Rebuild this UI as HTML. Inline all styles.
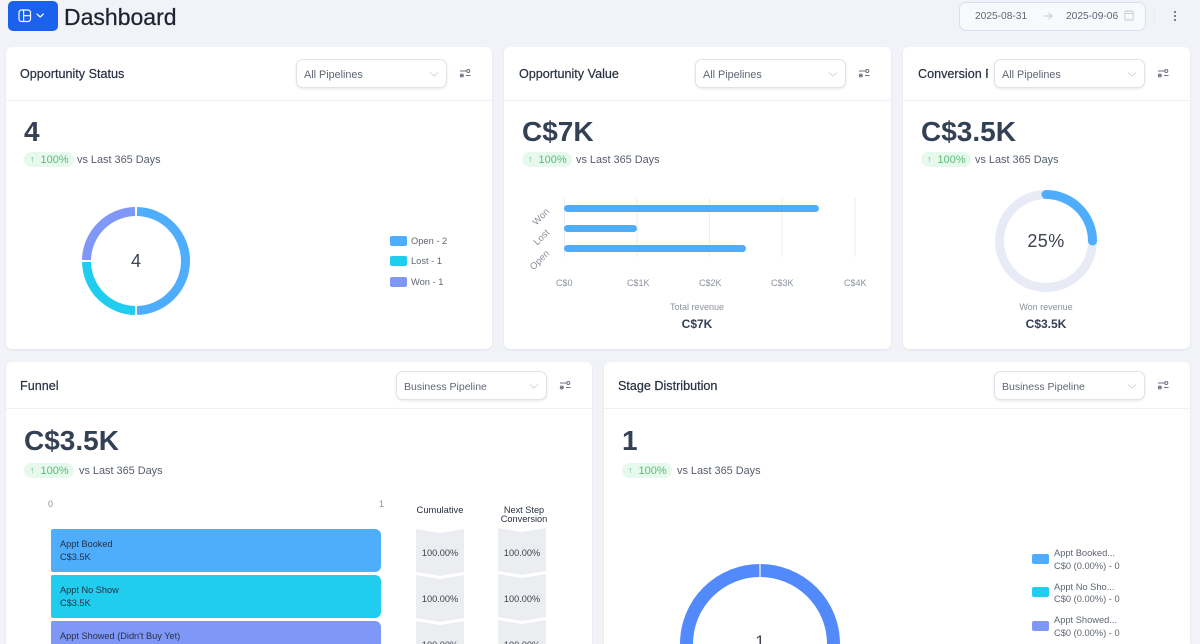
<!DOCTYPE html>
<html lang="en"><head><meta charset="utf-8"><title>Dashboard</title>
<style>
html,body{margin:0;padding:0;width:1200px;height:644px;overflow:hidden;background:#f1f3f8;font-family:"Liberation Sans",sans-serif;color:#344054}
#root{position:relative;width:1200px;height:644px;overflow:hidden;filter:blur(.35px)}
.a{position:absolute}
.t{position:absolute;white-space:nowrap;line-height:16px;height:16px}
.card{position:absolute;background:#fff;border-radius:6px;box-shadow:0 1px 2px rgba(16,24,40,.08)}
.open{border-radius:6px 6px 0 0}
.line{position:absolute;height:1px;background:#eef0f4}
.title{font-size:12.6px;color:#27303f;-webkit-text-stroke:.2px #27303f}
.sel{position:absolute;width:149px;height:27px;background:#fff;border:1px solid #e0e3ea;border-radius:7px;box-shadow:0 1px 2px rgba(16,24,40,.1)}
.sel span{position:absolute;left:7px;top:7px;font-size:10.8px;line-height:16px;color:#5f6673;white-space:nowrap}
.sel span.b{font-size:10.5px}
.sel svg{position:absolute;right:7px;top:11px}
.big{font-size:28px;font-weight:bold;color:#344054;line-height:32px;height:32px}
.badge{position:absolute;width:50px;height:15px;border-radius:8px;background:#e7f8ec;color:#57bd78;font-size:11px;line-height:16px;white-space:nowrap}
.badge i{font-style:normal;font-size:9px;margin:0 6px 0 6px;position:relative;top:-1px}
.vs{font-size:10.9px;color:#555d6b}
.sm{font-size:9px;color:#8b919c}
.leg{font-size:9.3px;color:#5f6673}
.sw{position:absolute;width:17px;height:10px;border-radius:2px}
.fb{position:absolute;left:51px;width:330px;border-radius:2px 6px 6px 2px}
.ft{font-size:9.2px;color:#27303f}
.pc{font-size:9.2px;color:#3d4450;width:48px;text-align:center}
.cut{height:7px;overflow:hidden}
</style></head><body><div id="root">

<div class="a" style="left:8px;top:1px;width:50px;height:30px;background:#1a62ee;border-radius:5px">
<svg class="a" style="left:10px;top:8px" width="30" height="14" viewBox="0 0 30 14" fill="none" stroke="#fff" stroke-width="1.2" stroke-linecap="round" stroke-linejoin="round"><rect x="1" y="1" width="11.5" height="11.5" rx="2.5"/><path d="M5.6 1v11.5M5.6 6.7h6.9"/><path d="M19 5l3.2 3 3.2-3"/></svg></div>
<div class="t" style="left:64px;top:4px;font-size:23px;line-height:26px;height:26px;color:#1d2430;-webkit-text-stroke:.25px #1d2430">Dashboard</div>

<div class="a" style="left:959px;top:2px;width:185px;height:27px;background:#f8f9fd;border:1px solid #d9dff0;border-radius:7px"></div>
<div class="t" style="left:975px;top:9px;font-size:10.2px;color:#5f6673">2025-08-31</div>
<svg class="a" style="left:1043px;top:11px" width="10" height="10" viewBox="0 0 10 10" fill="none" stroke="#c5c8ce" stroke-width=".9"><path d="M1 5h8M5.6 1.6L9 5 5.600 8.400"/></svg>
<div class="t" style="left:1066px;top:9px;font-size:10.2px;color:#5f6673">2025-09-06</div>
<svg class="a" style="left:1124px;top:10px" width="10" height="11" viewBox="0 0 10 11" fill="none" stroke="#c5c8ce" stroke-width=".9"><rect x=".8" y="1.2" width="8.4" height="8.8" rx="1"/><path d="M.8 3.6h8.4M3 .3v1.6M7 .3v1.6"/></svg>
<div class="a" style="left:1154px;top:8px;width:1px;height:16px;background:#eceef3"></div>
<svg class="a" style="left:1173px;top:10px" width="4" height="12" viewBox="0 0 4 12" fill="#555d6b"><circle cx="2" cy="2" r="1"/><circle cx="2" cy="6" r="1"/><circle cx="2" cy="10" r="1"/></svg>

<!-- Card 1 -->
<div class="card" style="left:6px;top:47px;width:486px;height:302px"></div>
<div class="line" style="left:6px;top:100px;width:486px"></div>
<div class="t title" style="left:20px;top:66px">Opportunity Status</div>
<div class="sel" style="left:296px;top:59px"><span>All Pipelines</span><svg width="10" height="7" viewBox="0 0 10 7" fill="none" stroke="#d5d8dd"><path d="M1 1.500l4 3.500 4-3.500"/></svg></div>
<svg class="a" style="left:459px;top:67px" width="12" height="12" viewBox="0 0 12 12" fill="none" stroke="#6b7280" stroke-width="1"><path d="M1 4h6.500M1 8.500h3.500M7 8.500h4.500"/><circle cx="9.300" cy="4" r="1.500"/><circle cx="2.800" cy="8.500" r="1.500"/></svg>
<div class="t big" style="left:24px;top:116px">4</div>
<div class="badge" style="left:24px;top:152px"><i>↑</i>100%</div>
<div class="t vs" style="left:77px;top:152px">vs Last 365 Days</div>
<svg class="a" style="left:76px;top:201px" width="120" height="120" viewBox="0 0 120 120" fill="none" stroke-width="9"><path d="M61 10.510A49.500 49.500 0 0 1 61 109.490" stroke="#4fadfd"/><path d="M59 109.490A49.500 49.500 0 0 1 10.510 61" stroke="#20cdee"/><path d="M10.510 59A49.500 49.500 0 0 1 59 10.510" stroke="#7f97f7"/></svg>
<div class="t" style="left:116px;top:251px;width:40px;text-align:center;font-size:18px;line-height:20px;height:20px;color:#3d4450">4</div>
<div class="sw" style="left:390px;top:236px;background:#4fadfd"></div><div class="t leg" style="left:411px;top:233px">Open - 2</div>
<div class="sw" style="left:390px;top:256px;background:#20cdee"></div><div class="t leg" style="left:411px;top:253px">Lost - 1</div>
<div class="sw" style="left:390px;top:277px;background:#7f97f7"></div><div class="t leg" style="left:411px;top:274px">Won - 1</div>

<!-- Card 2 -->
<div class="card" style="left:504px;top:47px;width:387px;height:302px"></div>
<div class="line" style="left:504px;top:100px;width:387px"></div>
<div class="t title" style="left:519px;top:66px">Opportunity Value</div>
<div class="sel" style="left:695px;top:59px"><span>All Pipelines</span><svg width="10" height="7" viewBox="0 0 10 7" fill="none" stroke="#d5d8dd"><path d="M1 1.500l4 3.500 4-3.500"/></svg></div>
<svg class="a" style="left:858px;top:67px" width="12" height="12" viewBox="0 0 12 12" fill="none" stroke="#6b7280" stroke-width="1"><path d="M1 4h6.500M1 8.500h3.500M7 8.500h4.500"/><circle cx="9.300" cy="4" r="1.500"/><circle cx="2.800" cy="8.500" r="1.500"/></svg>
<div class="t big" style="left:522px;top:116px">C$7K</div>
<div class="badge" style="left:522px;top:152px"><i>↑</i>100%</div>
<div class="t vs" style="left:576px;top:152px">vs Last 365 Days</div>
<svg class="a" style="left:520px;top:195px" width="350" height="80" viewBox="0 0 350 80" fill="none">
<path d="M44.500 3V62M117 3V62M189.500 3V62M262 3V62M335 3V62" stroke="#eceef1"/>
<rect x="44" y="10" width="255" height="7" rx="3.500" fill="#4fadfd"/><rect x="44" y="30" width="73" height="7" rx="3.500" fill="#4fadfd"/><rect x="44" y="50" width="182" height="7" rx="3.500" fill="#4fadfd"/>
<g font-family="Liberation Sans, sans-serif" font-size="9.500" fill="#8b919c" text-anchor="end">
<text transform="translate(30 17) rotate(-45)">Won</text><text transform="translate(30 38) rotate(-45)">Lost</text><text transform="translate(30 59) rotate(-45)">Open</text></g>
</svg>
<div class="t sm" style="left:556px;top:275px">C$0</div>
<div class="t sm" style="left:627px;top:275px">C$1K</div>
<div class="t sm" style="left:699px;top:275px">C$2K</div>
<div class="t sm" style="left:771px;top:275px">C$3K</div>
<div class="t sm" style="left:844px;top:275px">C$4K</div>
<div class="t sm" style="left:597px;top:299px;width:200px;text-align:center">Total revenue</div>
<div class="t" style="left:597px;top:316px;width:200px;text-align:center;font-size:12px;font-weight:bold;color:#344054">C$7K</div>

<!-- Card 3 -->
<div class="card" style="left:903px;top:47px;width:287px;height:302px"></div>
<div class="line" style="left:903px;top:100px;width:287px"></div>
<div class="t title" style="left:918px;top:66px;width:70px;overflow:hidden">Conversion Rate</div>
<div class="sel" style="left:994px;top:59px"><span>All Pipelines</span><svg width="10" height="7" viewBox="0 0 10 7" fill="none" stroke="#d5d8dd"><path d="M1 1.500l4 3.500 4-3.500"/></svg></div>
<svg class="a" style="left:1157px;top:67px" width="12" height="12" viewBox="0 0 12 12" fill="none" stroke="#6b7280" stroke-width="1"><path d="M1 4h6.500M1 8.500h3.500M7 8.500h4.500"/><circle cx="9.300" cy="4" r="1.500"/><circle cx="2.800" cy="8.500" r="1.500"/></svg>
<div class="t big" style="left:921px;top:116px">C$3.5K</div>
<div class="badge" style="left:921px;top:152px"><i>↑</i>100%</div>
<div class="t vs" style="left:975px;top:152px">vs Last 365 Days</div>
<svg class="a" style="left:990px;top:185px" width="112" height="112" viewBox="0 0 112 112" fill="none" stroke-width="9"><circle cx="56" cy="56" r="46.500" stroke="#e8ebf6"/><path d="M56 9.500A46.500 46.500 0 0 1 102.500 56" stroke="#4fadfd" stroke-linecap="round"/></svg>
<div class="t" style="left:1006px;top:231px;width:80px;text-align:center;font-size:18px;line-height:20px;height:20px;color:#3d4450;letter-spacing:.4px">25%</div>
<div class="t sm" style="left:946px;top:299px;width:200px;text-align:center">Won revenue</div>
<div class="t" style="left:946px;top:316px;width:200px;text-align:center;font-size:12px;font-weight:bold;color:#344054">C$3.5K</div>

<!-- Card 4 -->
<div class="card open" style="left:6px;top:362px;width:586px;height:282px"></div>
<div class="line" style="left:6px;top:408px;width:586px"></div>
<div class="t title" style="left:20px;top:378px">Funnel</div>
<div class="sel" style="left:396px;top:371px"><span class="b">Business Pipeline</span><svg width="10" height="7" viewBox="0 0 10 7" fill="none" stroke="#d5d8dd"><path d="M1 1.500l4 3.500 4-3.500"/></svg></div>
<svg class="a" style="left:559px;top:379px" width="12" height="12" viewBox="0 0 12 12" fill="none" stroke="#6b7280" stroke-width="1"><path d="M1 4h6.500M1 8.500h3.500M7 8.500h4.500"/><circle cx="9.300" cy="4" r="1.500"/><circle cx="2.800" cy="8.500" r="1.500"/></svg>
<div class="t big" style="left:24px;top:425px">C$3.5K</div>
<div class="badge" style="left:24px;top:463px"><i>↑</i>100%</div>
<div class="t vs" style="left:79px;top:463px">vs Last 365 Days</div>
<div class="t sm" style="left:48px;top:496px">0</div>
<div class="t sm" style="left:379px;top:496px">1</div>
<div class="fb" style="top:529px;height:43px;background:#4fadfd"></div>
<div class="fb" style="top:575px;height:43px;background:#20cdee"></div>
<div class="fb" style="top:621px;height:23px;background:#7f97f7;border-radius:2px 6px 0 0"></div>
<div class="t ft" style="left:60px;top:536px">Appt Booked</div><div class="t ft" style="left:60px;top:549px">C$3.5K</div>
<div class="t ft" style="left:60px;top:582px">Appt No Show</div><div class="t ft" style="left:60px;top:595px">C$3.5K</div>
<div class="t ft" style="left:60px;top:628px">Appt Showed (Didn't Buy Yet)</div>
<div class="t" style="left:400px;top:502px;width:80px;text-align:center;font-size:9.4px;color:#27303f">Cumulative</div>
<div class="t" style="left:484px;top:502px;width:80px;text-align:center;font-size:9.2px;color:#27303f;line-height:9px;height:20px;padding-top:4px;box-sizing:border-box">Next Step<br>Conversion</div>
<svg class="a" style="left:414px;top:525px" width="136" height="119" viewBox="0 0 136 119" fill="#ebedf0">
<path d="M2 4l24 4 24-4V47l-24 4-24-4z"/><path d="M2 50l24 4 24-4V93l-24 4-24-4z"/><path d="M2 96l24 4 24-4V119H2z"/>
<path d="M84 3l24 4 24-4V46l-24 4-24-4z"/><path d="M84 49l24 4 24-4V92l-24 4-24-4z"/><path d="M84 95l24 4 24-4V119H84z"/>
</svg>
<div class="t pc" style="left:416px;top:545px">100.00%</div><div class="t pc" style="left:498px;top:545px">100.00%</div>
<div class="t pc" style="left:416px;top:591px">100.00%</div><div class="t pc" style="left:498px;top:591px">100.00%</div>
<div class="t pc cut" style="left:416px;top:637px">100.00%</div><div class="t pc cut" style="left:498px;top:637px">100.00%</div>

<!-- Card 5 -->
<div class="card open" style="left:604px;top:362px;width:586px;height:282px"></div>
<div class="line" style="left:604px;top:408px;width:586px"></div>
<div class="t title" style="left:618px;top:378px">Stage Distribution</div>
<div class="sel" style="left:994px;top:371px"><span class="b">Business Pipeline</span><svg width="10" height="7" viewBox="0 0 10 7" fill="none" stroke="#d5d8dd"><path d="M1 1.500l4 3.500 4-3.500"/></svg></div>
<svg class="a" style="left:1157px;top:379px" width="12" height="12" viewBox="0 0 12 12" fill="none" stroke="#6b7280" stroke-width="1"><path d="M1 4h6.500M1 8.500h3.500M7 8.500h4.500"/><circle cx="9.300" cy="4" r="1.500"/><circle cx="2.800" cy="8.500" r="1.500"/></svg>
<div class="t big" style="left:622px;top:425px">1</div>
<div class="badge" style="left:622px;top:463px"><i>↑</i>100%</div>
<div class="t vs" style="left:677px;top:463px">vs Last 365 Days</div>
<svg class="a" style="left:670px;top:553px" width="180" height="91" viewBox="0 0 180 91" fill="none"><circle cx="90" cy="91" r="73.500" stroke="#5289fb" stroke-width="13"/><path d="M90 10v14" stroke="#fff" stroke-width="1.200"/></svg>
<div class="t" style="left:730px;top:632px;width:60px;text-align:center;font-size:17px;line-height:20px;height:12px;overflow:hidden;color:#3d4450">1</div>
<div class="sw" style="left:1032px;top:554px;background:#4fadfd"></div>
<div class="t leg" style="left:1054px;top:545px">Appt Booked...</div><div class="t leg" style="left:1054px;top:558px">C$0 (0.00%) - 0</div>
<div class="sw" style="left:1032px;top:587px;background:#20cdee"></div>
<div class="t leg" style="left:1054px;top:579px">Appt No Sho...</div><div class="t leg" style="left:1054px;top:591px">C$0 (0.00%) - 0</div>
<div class="sw" style="left:1032px;top:621px;background:#7f97f7"></div>
<div class="t leg" style="left:1054px;top:612px">Appt Showed...</div><div class="t leg" style="left:1054px;top:625px">C$0 (0.00%) - 0</div>

</div></body></html>
